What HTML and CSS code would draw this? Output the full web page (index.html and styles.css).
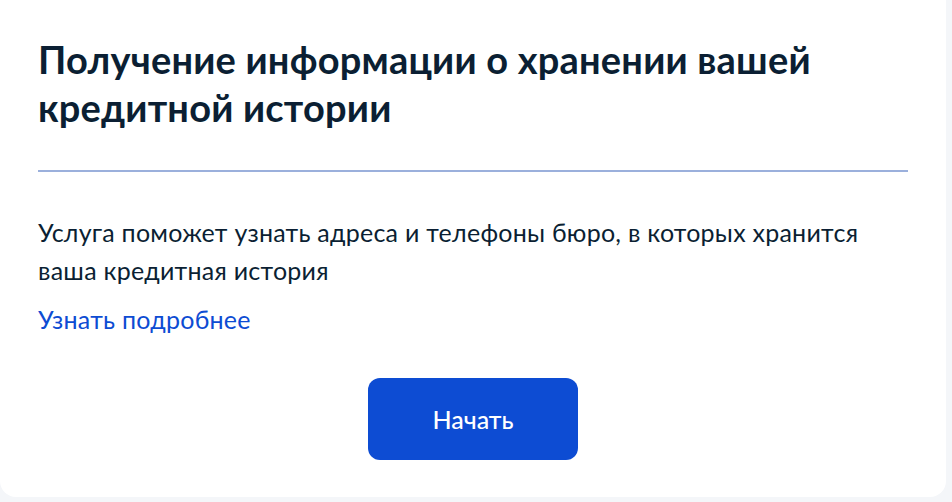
FILE: index.html
```html
<!DOCTYPE html>
<html lang="ru">
<head>
  <meta charset="UTF-8" />
  <title>Получение информации о хранении вашей кредитной истории</title>
  <link rel="stylesheet" href="styles.css">
</head>
<body>
  <div class="card">
    <h1 class="title">Получение информации о хранении вашей кредитной истории</h1>
    <hr class="divider" />
    <p class="lead">Услуга поможет узнать адреса и телефоны бюро, в которых хранится ваша кредитная история</p>
    <a class="more" href="#">Узнать подробнее</a>
    <div class="actions">
      <button class="btn" type="button">Начать</button>
    </div>
  </div>
</body>
</html>
```

FILE: styles.css
```css
html, body {
  margin: 0;
  padding: 0;
}
body {
  font-family: Lato, "Open Sans", sans-serif;
  background-color: #f4f6f9;
  color: #0b1f33;
  height: 502px;
  overflow: hidden;
}
.card {
  width: 946px;
  height: 497px;
  box-sizing: border-box;
  background-color: #ffffff;
  border-radius: 0 0 16px 16px;
  padding: 35px 38px 0 38px;
}
.title {
  margin: 0;
  font-size: 38px;
  line-height: 48px;
  font-weight: 700;
  letter-spacing: 0.2px;
  max-width: 830px;
}
.divider {
  border: 0;
  height: 2px;
  background-color: #9bb0dc;
  margin: 39px 0 0 0;
}
.lead {
  margin: 41px 0 0 0;
  font-size: 25px;
  line-height: 38px;
  letter-spacing: 0.25px;
  max-width: 850px;
}
.more {
  display: inline-block;
  margin-top: 12px;
  font-size: 25px;
  line-height: 36px;
  letter-spacing: 0.25px;
  color: #0d4cd3;
  text-decoration: none;
}
.actions {
  display: flex;
  justify-content: center;
  margin-top: 41px;
}
.btn {
  width: 210px;
  height: 82px;
  border: 0;
  border-radius: 12px;
  background-color: #0d4cd3;
  color: #ffffff;
  font-family: Lato, sans-serif;
  font-size: 25px;
  font-weight: 500;
}
```
